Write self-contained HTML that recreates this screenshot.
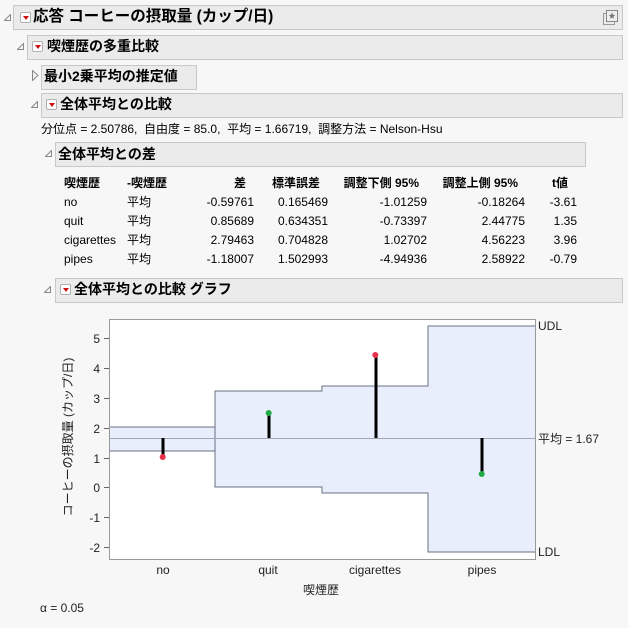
<!DOCTYPE html>
<html><head><meta charset="utf-8"><style>
body{margin:0;width:628px;height:628px;background:#f7f7f7;position:relative;overflow:hidden;font-family:"Liberation Sans","Noto Sans CJK JP",sans-serif;color:#000}
.box{position:absolute;background:#ebebeb;border:1px solid #c8c8c8;box-sizing:border-box}
.h{position:absolute;font-weight:bold;font-size:14px;line-height:16px;white-space:nowrap}
.dt{position:absolute;width:7px;height:7px}
.btn{position:absolute;width:11px;height:11px;background:#fff;border:1px solid #b0b0b0;box-sizing:border-box;border-radius:2px}
.btn:after{content:"";position:absolute;left:2px;top:3px;border-left:3px solid transparent;border-right:3px solid transparent;border-top:4px solid #d01010}
.t{position:absolute;font-size:12px;line-height:14px;white-space:nowrap}
.r{text-align:right}
</style></head><body>
<svg class="dt" style="left:4px;top:14px" viewBox="0 0 7 7"><path d="M6.5 0.5V6.5H0.5Z" fill="none" stroke="#888"/></svg>
<div class="box" style="left:13px;top:5px;width:610px;height:25px"></div>
<div class="btn" style="left:20px;top:12px"></div>
<div class="h" style="left:33px;top:8px;font-size:15.5px;line-height:18px">応答 コーヒーの摂取量 (カップ/日)</div>
<svg style="position:absolute;left:602px;top:8px" width="18" height="18" viewBox="0 0 18 18"><rect x="1.5" y="5.5" width="11" height="11" fill="none" stroke="#999"/><rect x="4.5" y="2.5" width="11" height="11" fill="#eee" stroke="#888"/><path d="M10 4.5l1 2.3 2.3.2-1.8 1.5.6 2.3-2.1-1.3-2.1 1.3.6-2.3-1.8-1.5 2.3-.2z" fill="#777"/></svg>

<svg class="dt" style="left:17px;top:43px" viewBox="0 0 7 7"><path d="M6.5 0.5V6.5H0.5Z" fill="none" stroke="#888"/></svg>
<div class="box" style="left:27px;top:35px;width:596px;height:25px"></div>
<div class="btn" style="left:32px;top:41px"></div>
<div class="h" style="left:47px;top:38px">喫煙歴の多重比較</div>

<svg style="position:absolute;left:32px;top:70px" width="7" height="11" viewBox="0 0 7 11"><path d="M0.5 0.5L6 5.5L0.5 10.5Z" fill="none" stroke="#888"/></svg>
<div class="box" style="left:41px;top:65px;width:156px;height:25px"></div>
<div class="h" style="left:44px;top:68px">最小2乗平均の推定値</div>

<svg class="dt" style="left:31px;top:101px" viewBox="0 0 7 7"><path d="M6.5 0.5V6.5H0.5Z" fill="none" stroke="#888"/></svg>
<div class="box" style="left:41px;top:93px;width:582px;height:25px"></div>
<div class="btn" style="left:46px;top:99px"></div>
<div class="h" style="left:60px;top:96px">全体平均との比較</div>
<div class="t" style="left:41px;top:122px">分位点 = 2.50786,&nbsp; 自由度 = 85.0,&nbsp; 平均 = 1.66719,&nbsp; 調整方法 = Nelson-Hsu</div>

<svg class="dt" style="left:45px;top:150px" viewBox="0 0 7 7"><path d="M6.5 0.5V6.5H0.5Z" fill="none" stroke="#888"/></svg>
<div class="box" style="left:55px;top:142px;width:531px;height:25px"></div>
<div class="h" style="left:58px;top:146px">全体平均との差</div>

<div class="t" style="left:64px;top:176px;font-weight:bold">喫煙歴</div>
<div class="t" style="left:127px;top:176px;font-weight:bold">-喫煙歴</div>
<div class="t r" style="right:382px;top:176px;font-weight:bold">差</div>
<div class="t r" style="right:308px;top:176px;font-weight:bold">標準誤差</div>
<div class="t r" style="right:209px;top:176px;font-weight:bold">調整下側 95%</div>
<div class="t r" style="right:110px;top:176px;font-weight:bold">調整上側 95%</div>
<div class="t" style="left:552px;top:176px;font-weight:bold">t値</div>

<div class="t" style="left:64px;top:195px">no</div><div class="t" style="left:127px;top:195px">平均</div>
<div class="t r" style="right:374px;top:195px">-0.59761</div><div class="t r" style="right:300px;top:195px">0.165469</div><div class="t r" style="right:201px;top:195px">-1.01259</div><div class="t r" style="right:103px;top:195px">-0.18264</div><div class="t r" style="right:51px;top:195px">-3.61</div>
<div class="t" style="left:64px;top:214px">quit</div><div class="t" style="left:127px;top:214px">平均</div>
<div class="t r" style="right:374px;top:214px">0.85689</div><div class="t r" style="right:300px;top:214px">0.634351</div><div class="t r" style="right:201px;top:214px">-0.73397</div><div class="t r" style="right:103px;top:214px">2.44775</div><div class="t r" style="right:51px;top:214px">1.35</div>
<div class="t" style="left:64px;top:233px">cigarettes</div><div class="t" style="left:127px;top:233px">平均</div>
<div class="t r" style="right:374px;top:233px">2.79463</div><div class="t r" style="right:300px;top:233px">0.704828</div><div class="t r" style="right:201px;top:233px">1.02702</div><div class="t r" style="right:103px;top:233px">4.56223</div><div class="t r" style="right:51px;top:233px">3.96</div>
<div class="t" style="left:64px;top:252px">pipes</div><div class="t" style="left:127px;top:252px">平均</div>
<div class="t r" style="right:374px;top:252px">-1.18007</div><div class="t r" style="right:300px;top:252px">1.502993</div><div class="t r" style="right:201px;top:252px">-4.94936</div><div class="t r" style="right:103px;top:252px">2.58922</div><div class="t r" style="right:51px;top:252px">-0.79</div>

<svg class="dt" style="left:44px;top:286px" viewBox="0 0 7 7"><path d="M6.5 0.5V6.5H0.5Z" fill="none" stroke="#888"/></svg>
<div class="box" style="left:55px;top:278px;width:568px;height:25px"></div>
<div class="btn" style="left:60px;top:284px"></div>
<div class="h" style="left:74px;top:281px">全体平均との比較 グラフ</div>

<svg style="position:absolute;left:0;top:0" width="628" height="628" font-family="Liberation Sans, Noto Sans CJK JP, sans-serif" font-size="12">
<rect x="109.5" y="319.5" width="426" height="240" fill="#fff" stroke="#999"/>
<path d="M110 427H215V391H322V386H428V326H535V552H428V493H322V487H215V451H110Z" fill="#e8eefc"/>
<path d="M110 427H215V391H322V386H428V326H535M535 552H428V493H322V487H215V451H110M215 427V451" fill="none" stroke="#6a7080"/>
<line x1="110" y1="438.5" x2="535" y2="438.5" stroke="#a0a8b8"/>
<g stroke="#000" stroke-width="3">
<line x1="163" y1="438" x2="163" y2="457"/><line x1="269" y1="438" x2="269" y2="413"/><line x1="376" y1="438" x2="376" y2="355"/><line x1="482" y1="438" x2="482" y2="474"/></g>
<circle cx="162.7" cy="457" r="3" fill="#e8304a"/><circle cx="268.7" cy="413" r="3" fill="#22aa44"/><circle cx="375.3" cy="355" r="3" fill="#e8304a"/><circle cx="481.7" cy="474" r="3" fill="#22aa44"/>
<g stroke="#666">
<line x1="104" y1="338.5" x2="109" y2="338.5"/><line x1="104" y1="368.5" x2="109" y2="368.5"/><line x1="104" y1="398.5" x2="109" y2="398.5"/><line x1="104" y1="428.5" x2="109" y2="428.5"/><line x1="104" y1="458.5" x2="109" y2="458.5"/><line x1="104" y1="487.5" x2="109" y2="487.5"/><line x1="104" y1="517.5" x2="109" y2="517.5"/><line x1="104" y1="547.5" x2="109" y2="547.5"/></g>
<g text-anchor="end" fill="#222">
<text x="100" y="343">5</text><text x="100" y="373">4</text><text x="100" y="403">3</text><text x="100" y="433">2</text><text x="100" y="463">1</text><text x="100" y="492">0</text><text x="100" y="522">-1</text><text x="100" y="552">-2</text></g>
<text transform="translate(72,437) rotate(-90)" text-anchor="middle" fill="#222">コーヒーの摂取量 (カップ/日)</text>
<g text-anchor="middle" fill="#222">
<text x="163" y="574">no</text><text x="268" y="574">quit</text><text x="375" y="574">cigarettes</text><text x="482" y="574">pipes</text>
<text x="321" y="594">喫煙歴</text></g>
<text x="538" y="330" fill="#222">UDL</text><text x="538" y="443" fill="#222">平均 = 1.67</text><text x="538" y="556" fill="#222">LDL</text>
<text x="40" y="612" fill="#222">α = 0.05</text>
</svg>
</body></html>
